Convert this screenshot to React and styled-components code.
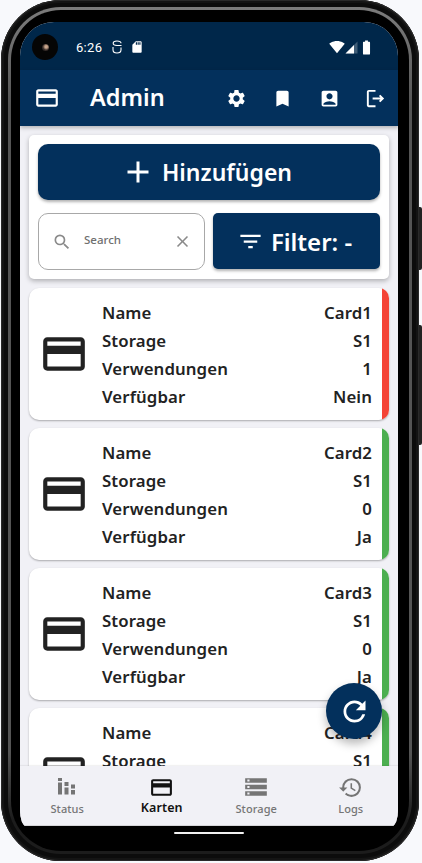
import React from "react";
import styled, { createGlobalStyle } from "styled-components";
import {
  MdCreditCard,
  MdSettings,
  MdBookmark,
  MdAccountBox,
  MdOutlineLogout,
  MdAdd,
  MdSearch,
  MdClose,
  MdFilterList,
  MdRefresh,
  MdStorage,
  MdHistory,
  MdSdCard,
  MdBatteryFull,
  MdSignalWifi4Bar,
} from "react-icons/md";

const cards = [
  { name: "Card1", storage: "S1", uses: "1", free: "Nein", color: "#f44336" },
  { name: "Card2", storage: "S1", uses: "0", free: "Ja", color: "#4caf50" },
  { name: "Card3", storage: "S1", uses: "0", free: "Ja", color: "#4caf50" },
  { name: "Card4", storage: "S1", uses: "0", free: "Ja", color: "#4caf50" },
];

const GlobalStyle = createGlobalStyle`
  html, body {
    margin: 0;
    padding: 0;
    height: 863px;
    overflow: hidden;
    background: #f8f9fc;
    font-family: "Noto Sans", "Open Sans", sans-serif;
  }
`;

const Phone = styled.div`
  position: relative;
  box-sizing: border-box;
  width: 418px;
  height: 861px;
  margin-left: 1px;
  padding: 22px 21px 35px 19px;
  border-radius: 60px;
  background: #0c0c0c;
  box-shadow: inset 0 0 0 1px #2a2a2a, inset 0 0 0 3px #141414;

  /* the metal ring, lighter at the top and fading out at the bottom */
  &::before {
    content: "";
    position: absolute;
    inset: 7px;
    border-radius: 53px;
    background: linear-gradient(#7c7c7c, #555 12%, #555 88%, #1c1c1c 96%);
  }

  &::after {
    content: "";
    position: absolute;
    inset: 10px;
    border-radius: 50px;
    background: #000;
  }
`;

const SideButton = styled.div`
  position: absolute;
  right: -3px;
  top: ${(p) => p.$top}px;
  width: 3px;
  height: ${(p) => p.$height}px;
  background: #222;
  border-radius: 0 2px 2px 0;
`;

const Screen = styled.div`
  position: relative;
  z-index: 1;
  width: 378px;
  height: 804px;
  display: flex;
  flex-direction: column;
  overflow: hidden;
  background: #f1f1f6;
  border-radius: 34px 34px 6px 6px / 34px 34px 16px 16px;
`;

const StatusBar = styled.div`
  flex: 0 0 48px;
  display: flex;
  align-items: center;
  padding: 2px 23px 0 12px;
  box-sizing: border-box;
  background: #00274a;
  color: #fff;
`;

const Camera = styled.div`
  width: 26px;
  height: 26px;
  border-radius: 50%;
  background: #050505;
  display: flex;
  align-items: center;
  justify-content: center;
  margin-right: 18px;

  &::after {
    content: "";
    width: 7px;
    height: 7px;
    border-radius: 50%;
    background: radial-gradient(circle at 60% 40%, #c9a68c 0 20%, #3c302c 55%, #141414 100%);
  }
`;

const Time = styled.span`
  font-family: "Roboto", sans-serif;
  font-size: 13px;
  letter-spacing: 0.3px;
  margin-right: 10px;
`;

const SdIcon = styled(MdSdCard)`
  margin-left: 8px;
`;

const StatusRight = styled.div`
  margin-left: auto;
  display: flex;
  align-items: center;
`;

const AppBar = styled.div`
  flex: 0 0 56px;
  display: flex;
  align-items: center;
  margin-right: -1px;
  padding: 0 0 0 14px;
  box-sizing: border-box;
  background: #03305c;
  color: #fff;
  box-shadow: 0 2px 4px rgba(0, 0, 0, 0.25);
  z-index: 2;
`;

const Title = styled.h1`
  margin: 0 0 0 30px;
  flex: 1;
  font-size: 23.5px;
  line-height: 1;
  font-weight: 600;
`;

const AppBarAction = styled.div`
  width: 46.5px;
  display: flex;
  justify-content: center;
  align-items: center;
`;

const Content = styled.div`
  flex: 1;
  min-height: 0;
  overflow: hidden;
  display: flex;
  flex-direction: column;
  gap: 8px;
  padding: 9px;
`;

const Panel = styled.div`
  flex: none;
  height: 144px;
  margin-bottom: 1px;
  box-sizing: border-box;
  padding: 9px;
  display: flex;
  flex-direction: column;
  gap: 13px;
  background: #fff;
  border-radius: 5px;
  box-shadow: 0 2px 5px rgba(0, 0, 0, 0.28);
`;

const PrimaryButton = styled.button`
  border: 0;
  padding: 0 ${(p) => p.$shift}px 0 0;
  display: flex;
  align-items: center;
  justify-content: center;
  gap: ${(p) => p.$gap}px;
  height: ${(p) => p.$height}px;
  border-radius: ${(p) => p.$radius}px;
  background: #03305c;
  color: #fff;
  font-family: inherit;
  font-size: ${(p) => p.$size}px;
  font-weight: 600;
  box-shadow: 0 2px 3px rgba(0, 0, 0, 0.3);
`;

const FilterRow = styled.div`
  display: grid;
  grid-template-columns: 1fr 1fr;
  gap: 8px;
`;

const SearchBox = styled.div`
  box-sizing: border-box;
  height: 57px;
  display: flex;
  align-items: center;
  padding: 0 12px 0 13px;
  color: #8a8a8a;
  background: #fff;
  border: 1px solid #a8a8a8;
  border-radius: 10px;
`;

const SearchText = styled.span`
  flex: 1;
  margin: -4px 0 0 12px;
  font-size: 11.5px;
  font-weight: 500;
  color: #6f6f6f;
`;

const Card = styled.div`
  flex: none;
  height: 132px;
  box-sizing: border-box;
  display: flex;
  align-items: center;
  background: #fff;
  border-radius: 10px;
  overflow: hidden;
  box-shadow: 0 1px 2px rgba(0, 0, 0, 0.3);
`;

const CardIcon = styled.div`
  flex: 0 0 73px;
  padding-left: 10px;
  box-sizing: border-box;
  display: flex;
  color: #222;
`;

const CardRows = styled.div`
  flex: 1;
  padding-right: 10px;
`;

const CardRow = styled.div`
  height: 28px;
  display: flex;
  align-items: center;
  justify-content: space-between;
  font-size: 16.8px;
  letter-spacing: 0.1px;
  font-weight: 600;
  color: #222;
`;

const CardBar = styled.div`
  flex: 0 0 7px;
  align-self: stretch;
  background: ${(p) => p.$color};
`;

const Fab = styled.button`
  position: absolute;
  left: 306px;
  top: 661px;
  width: 56px;
  height: 56px;
  border: 0;
  padding: 0;
  border-radius: 50%;
  display: flex;
  align-items: center;
  justify-content: center;
  background: #03305c;
  color: #fff;
  box-shadow: 0 5px 10px rgba(0, 0, 0, 0.28);
  z-index: 3;
`;

const BottomNav = styled.div`
  flex: 0 0 60px;
  display: grid;
  grid-template-columns: repeat(4, 1fr);
  background: #f1f1f6;
  box-shadow: 0 -1px 1px rgba(0, 0, 0, 0.05);
  border-bottom: 1px solid #d5d5d8;
  box-sizing: border-box;
  z-index: 2;
`;

const NavItem = styled.div`
  display: flex;
  flex-direction: column;
  align-items: center;
  padding-top: 8px;
  color: ${(p) => (p.$active ? "#111" : "#757575")};
  font-size: ${(p) => (p.$active ? 12.5 : 11)}px;
  font-weight: ${(p) => (p.$active ? 600 : 500)};
  letter-spacing: 0.1px;
  line-height: 16px;
`;

const NavIconSlot = styled.div`
  height: 26px;
  margin-bottom: ${(p) => (p.$active ? 0 : 1)}px;
  display: flex;
  align-items: center;
  justify-content: center;
`;

const HomeIndicator = styled.div`
  position: absolute;
  z-index: 1;
  left: 173px;
  top: 832px;
  width: 70px;
  height: 2px;
  background: #f1f1f1;
  border-radius: 1px;
`;

const StatsIcon = () => (
  <svg width="20" height="20" viewBox="0 0 20 20" fill="currentColor">
    <rect x="1" y="1" width="4" height="3" />
    <rect x="1" y="5.5" width="4" height="12" />
    <rect x="7.5" y="5" width="4" height="4" />
    <rect x="7.5" y="10.5" width="4" height="7" />
    <rect x="14" y="7.5" width="4" height="4" />
    <rect x="14" y="13" width="4" height="4.5" />
  </svg>
);

const SyncIcon = () => (
  <svg width="10" height="14" viewBox="0 0 10 14" fill="none" stroke="#fff" strokeWidth="1.1">
    <path d="M9 3.200C9 1.800 7.200 1 5 1S1.200 1.800 1.200 3.200 3 5.400 5 5.500h4.500" />
    <path d="M1 7v2.700C1 11.800 2.800 13 5 13s4-1.200 4-3.300V7.500" />
  </svg>
);

const SignalIcon = () => (
  <svg width="13" height="13" viewBox="0 0 13 13">
    <path d="M12.500 0.500V12.500H0.500Z" fill="#fff" fillOpacity="0.25" />
    <path d="M9 4V12.500H0.500Z" fill="#fff" />
  </svg>
);

const InfoCard = ({ card }) => (
  <Card>
    <CardIcon>
      <MdCreditCard size={50} />
    </CardIcon>
    <CardRows>
      <CardRow>
        <span>Name</span>
        <span>{card.name}</span>
      </CardRow>
      <CardRow>
        <span>Storage</span>
        <span>{card.storage}</span>
      </CardRow>
      <CardRow>
        <span>Verwendungen</span>
        <span>{card.uses}</span>
      </CardRow>
      <CardRow>
        <span>Verfügbar</span>
        <span>{card.free}</span>
      </CardRow>
    </CardRows>
    <CardBar $color={card.color} />
  </Card>
);

export default function App() {
  return (
    <>
      <GlobalStyle />
      <Phone>
        <SideButton $top={207} $height={63} />
        <SideButton $top={325} $height={120} />
        <Screen>
          <StatusBar>
            <Camera />
            <Time>6:26</Time>
            <SyncIcon />
            <SdIcon size={14} />
            <StatusRight>
              <MdSignalWifi4Bar size={16} />
              <SignalIcon />
              <MdBatteryFull size={17} />
            </StatusRight>
          </StatusBar>
          <AppBar>
            <MdCreditCard size={26} />
            <Title>Admin</Title>
            <AppBarAction><MdSettings size={21} /></AppBarAction>
            <AppBarAction><MdBookmark size={21} /></AppBarAction>
            <AppBarAction><MdAccountBox size={21} /></AppBarAction>
            <AppBarAction><MdOutlineLogout size={23} /></AppBarAction>
          </AppBar>
          <Content>
            <Panel>
              <PrimaryButton $height={56} $radius={10} $size={23} $gap={6} $shift={6}>
                <MdAdd size={36} />
                Hinzufügen
              </PrimaryButton>
              <FilterRow>
                <SearchBox>
                  <MdSearch size={20} />
                  <SearchText>Search</SearchText>
                  <MdClose size={19} />
                </SearchBox>
                <PrimaryButton $height={56} $radius={5} $size={24} $gap={7} $shift={4}>
                  <MdFilterList size={27} />
                  Filter: -
                </PrimaryButton>
              </FilterRow>
            </Panel>
            {cards.map((card) => (
              <InfoCard key={card.name} card={card} />
            ))}
          </Content>
          <Fab>
            <MdRefresh size={33} />
          </Fab>
          <BottomNav>
            <NavItem>
              <NavIconSlot><StatsIcon /></NavIconSlot>
              Status
            </NavItem>
            <NavItem $active>
              <NavIconSlot $active><MdCreditCard size={25} /></NavIconSlot>
              Karten
            </NavItem>
            <NavItem>
              <NavIconSlot><MdStorage size={26} /></NavIconSlot>
              Storage
            </NavItem>
            <NavItem>
              <NavIconSlot><MdHistory size={25} /></NavIconSlot>
              Logs
            </NavItem>
          </BottomNav>
        </Screen>
        <HomeIndicator />
      </Phone>
    </>
  );
}
